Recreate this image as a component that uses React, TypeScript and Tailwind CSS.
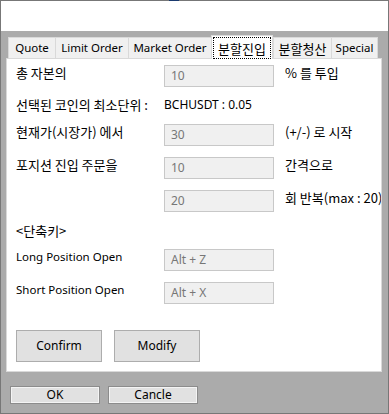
import React from "react";

const ko = "font-['Noto_Sans_CJK_KR',sans-serif] text-[13px]";

const tabs = [
  { label: "Quote", w: "w-[47px]" },
  { label: "Limit Order", w: "w-[73px]" },
  { label: "Market Order", w: "w-[83px]" },
  { label: "분할진입", w: "w-[62px]", active: true, kr: true },
  { label: "분할청산", w: "w-[58px]", kr: true },
  { label: "Special", w: "w-[47px]", last: true },
];

function Field({ value }: { value: string }) {
  return (
    <div className="flex h-[22px] w-[110px] shrink-0 items-center border border-[#c8c8c8] bg-[#f0f0f0] pl-[6px] text-[12px] text-[#777777]">
      {value}
    </div>
  );
}

function Row({ label, value, after, latin, className = "" }: { label?: string; value?: string; after?: string; latin?: boolean; className?: string }) {
  return (
    <div className={`flex h-[22px] items-start whitespace-nowrap ${className}`}>
      <div className={`w-[148px] shrink-0 leading-[16px] ${latin ? "" : ko}`}>{label}</div>
      {value ? <Field value={value} /> : <div className="w-[110px] shrink-0" />}
      {after && <div className={`ml-[11px] leading-[16px] ${ko}`}>{after}</div>}
    </div>
  );
}

export default function App() {
  return (
    <div className="relative flex h-[414px] w-[389px] flex-col border border-[#777777] bg-[#ababab] font-['Noto_Sans',sans-serif] text-[11.5px] text-black">
      <span className="absolute left-[168px] top-[-1px] h-px w-[10px] bg-[#1a3a6e]" />
      <div className="h-[30px] shrink-0 bg-white" />

      <div className="ml-[5px] mt-[4px] w-[376px]">
        <div className="flex h-[23px] items-end pl-[2px]">
          {tabs.map((t) =>
            t.active ? (
              <div
                key={t.label}
                className={`relative z-10 -mb-px flex h-[24px] items-center justify-center border border-b-0 border-[#d9d9d9] bg-white px-px pt-px ${t.w}`}
              >
                <div className={`flex h-full w-full items-center justify-center border border-dotted border-black leading-none ${ko}`}>
                  {t.label}
                </div>
              </div>
            ) : (
              <div
                key={t.label}
                className={`flex h-[21px] items-center justify-center border-l border-t border-[#d9d9d9] bg-[#f0f0f0] leading-none ${t.last ? "border-r" : ""} ${t.kr ? ko : ""} ${t.w}`}
              >
                {t.label}
              </div>
            )
          )}
        </div>

        <div className="flex h-[314px] flex-col overflow-hidden border border-[#d9d9d9] bg-white pl-[9px] pt-[6px]">
          <Row label="총 자본의" value="10" after="% 를 투입" />
          <div className="mt-[10px] flex h-[22px] items-start whitespace-nowrap leading-[16px]">
            <div className={`w-[148px] shrink-0 ${ko}`}>선택된 코인의 최소단위 :</div>
            <div className="text-[12px]">BCHUSDT : 0.05</div>
          </div>
          <Row className="mt-[5px]" label="현재가(시장가) 에서" value="30" after="(+/-) 로 시작" />
          <Row className="mt-[11px]" label="포지션 진입 주문을" value="10" after="간격으로" />
          <Row className="mt-[11px]" value="20" after="회 반복(max : 20)" />
          <Row className="mt-[11px]" label="<단축키>" />
          <Row className="mt-[4px]" latin label="Long Position Open" value="Alt + Z" />
          <Row className="mt-[11px]" latin label="Short Position Open" value="Alt + X" />

          <div className="mt-[26px] flex gap-[12px] text-[12px]">
            <button className="h-[32px] w-[86px] border border-[#adadad] bg-[#e1e1e1]">Confirm</button>
            <button className="h-[32px] w-[86px] border border-[#adadad] bg-[#e1e1e1]">Modify</button>
          </div>
        </div>
      </div>

      <div className="ml-[10px] mt-[15px] flex gap-[10px] text-[12px]">
        <button className="flex h-[16px] w-[88px] items-center justify-center border border-[#f4f4f4] bg-[#e1e1e1] leading-none shadow-[0_0_0_1px_#8c8c8c]">
          OK
        </button>
        <button className="flex h-[16px] w-[88px] items-center justify-center border border-[#f4f4f4] bg-[#e1e1e1] leading-none shadow-[0_0_0_1px_#8c8c8c]">
          Cancle
        </button>
      </div>
    </div>
  );
}
